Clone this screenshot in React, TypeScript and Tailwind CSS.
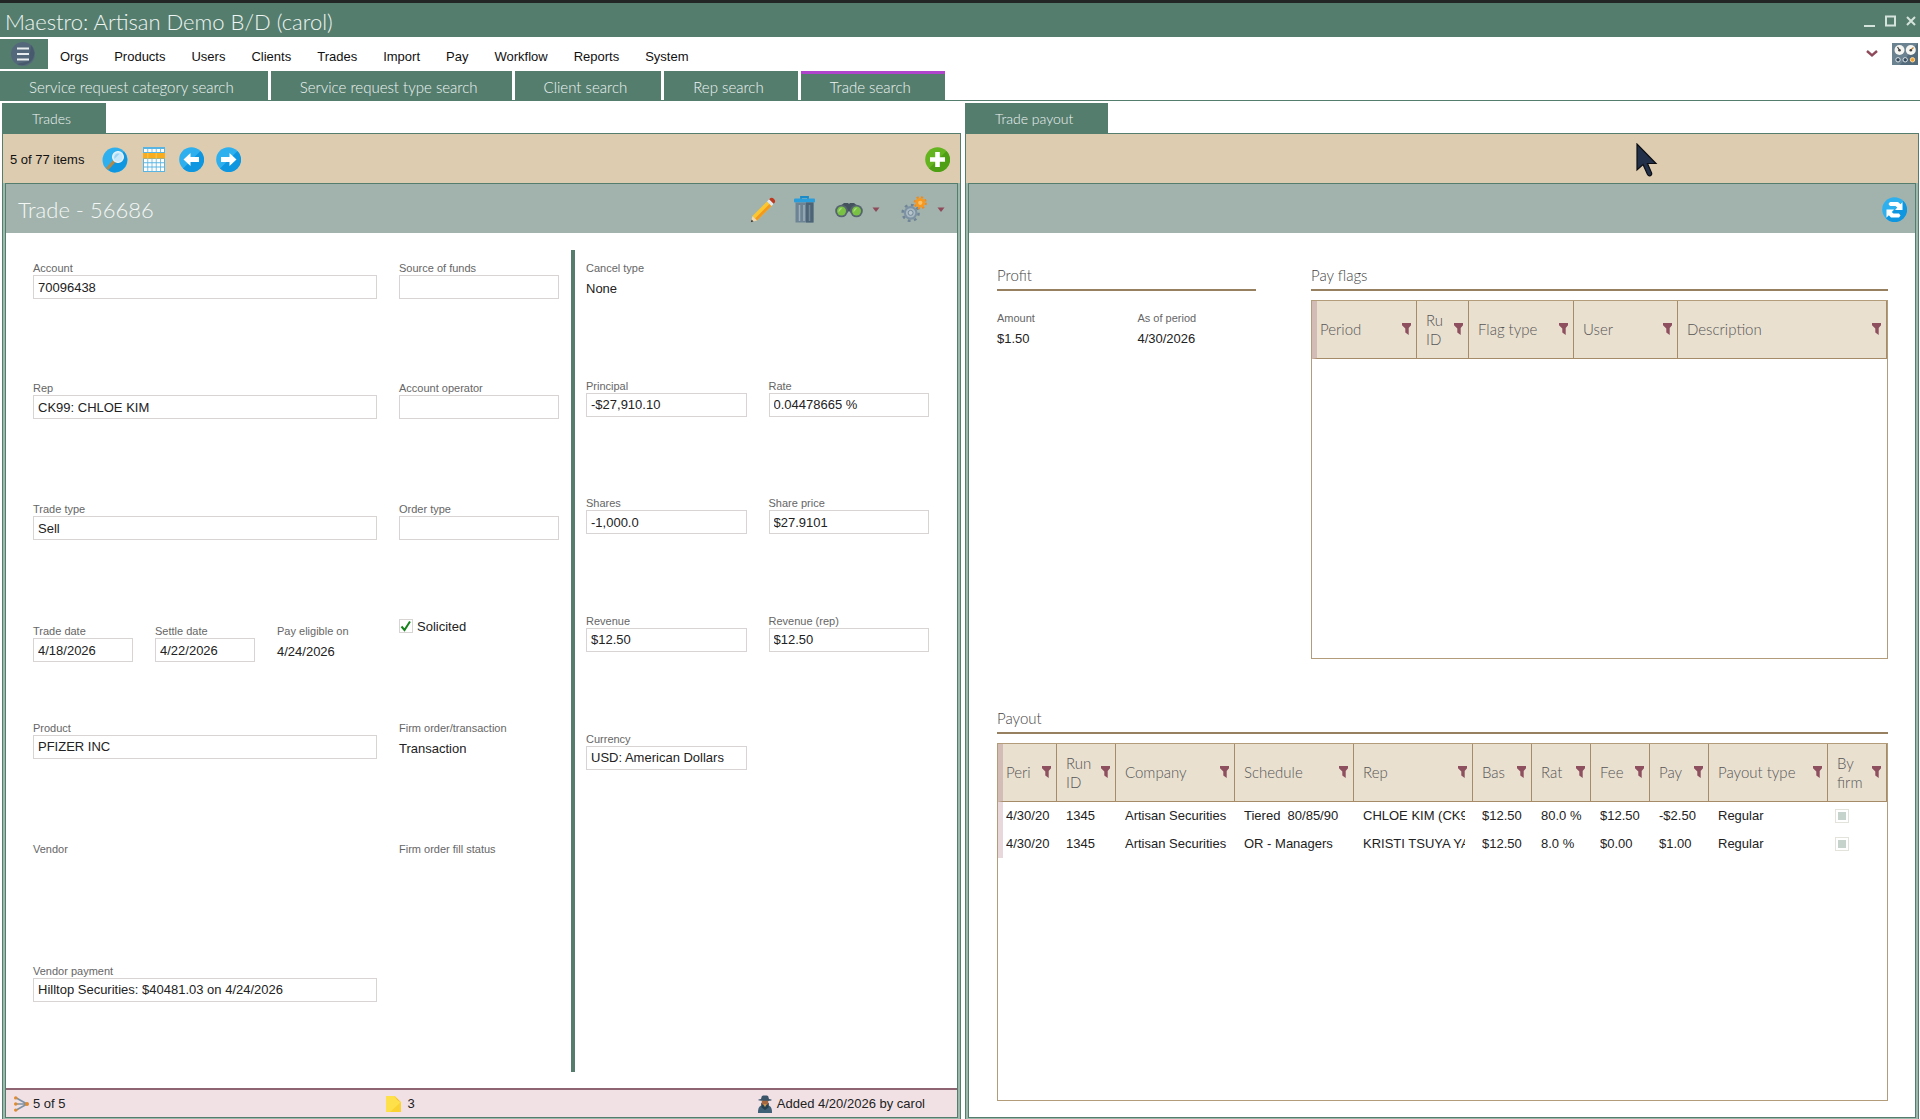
import type { ReactNode } from "react";

/* ---------- icons ---------- */

const MenuIcon = () => (
  <svg width="24" height="24" viewBox="0 0 24 24" aria-hidden="true">
    <circle cx="12" cy="12" r="12" fill="#54687b" />
    <path d="M20 3a12 12 0 0 1-14 19l12-3z" fill="#475a6d" />
    <path d="M6 6.5h12M6 12h12M6 17.5h12" stroke="#e8eef0" strokeWidth="2.2" />
  </svg>
);

const SearchIcon = () => (
  <svg width="26" height="26" viewBox="0 0 26 26" aria-hidden="true">
    <circle cx="13" cy="13" r="12.5" fill="#2fb0ee" />
    <path d="M22 4.5A12.5 12.5 0 0 1 9 24.8l-3-2z" fill="#0e96e0" />
    <path d="M6 21l6-6.5" stroke="#b08a4a" strokeWidth="3.2" strokeLinecap="round" />
    <circle cx="16" cy="10" r="5.4" fill="#c9e9fa" stroke="#eef6fa" strokeWidth="1.2" />
    <path d="M12.5 12a4 4 0 0 1 5-5.2z" fill="#9dd4f2" />
  </svg>
);

const TableIcon = () => (
  <svg width="22" height="25" viewBox="0 0 22 25" aria-hidden="true">
    <rect width="22" height="25" fill="#58b4e2" />
    <path
      d="M1 2h3.4v3H1zM5.200 2h3.400v3H5.200zM9.400 2h3.400v3H9.400zM13.600 2h3.400v3h-3.400zM17.800 2h3.200v3h-3.200zM1 12h3.400v3.300H1zM5.200 12h3.400v3.300H5.200zM9.400 12h3.400v3.300H9.400zM13.600 12h3.400v3.300h-3.400zM17.800 12h3.200v3.300h-3.200zM1 16.300h3.400v3.300H1zM5.200 16.300h3.400v3.300H5.200zM9.400 16.300h3.400v3.300H9.400zM13.600 16.300h3.400v3.300h-3.400zM17.800 16.300h3.200v3.300h-3.200zM1 20.600h3.400v3.400H1zM5.200 20.600h3.400v3.400H5.200zM9.400 20.600h3.400v3.400H9.400zM13.600 20.600h3.400v3.400h-3.400zM17.800 20.600h3.200v3.400h-3.200z"
      fill="#fff"
    />
    <rect y="6" width="22" height="5.500" fill="#f9ad1c" />
    <path d="M4.800 6v5.500M13.200 6v5.500" stroke="#fbc75c" strokeWidth="1" />
  </svg>
);

const ArrowIcon = ({ back = false }: { back?: boolean }) => (
  <svg width="25" height="25" viewBox="0 0 25 25" aria-hidden="true">
    <circle cx="12.5" cy="12.5" r="12.3" fill="#2fb0ee" />
    <path d="M21.500 4A12.3 12.3 0 0 1 4 21.500z" fill="#0e96e0" />
    {back ? (
      <path d="M4.500 12.500l7-6.500v4h8.500v5h-8.500v4z" fill="#fff" />
    ) : (
      <path d="M20.500 12.500l-7-6.500v4H5v5h8.500v4z" fill="#fff" />
    )}
  </svg>
);

const AddIcon = () => (
  <svg width="25" height="25" viewBox="0 0 25 25" aria-hidden="true">
    <circle cx="12.5" cy="12.5" r="12.3" fill="#64b420" />
    <path d="M21.500 4A12.3 12.3 0 0 1 4 21.500z" fill="#4f9f15" />
    <path d="M12.500 5v15M5 12.500h15" stroke="#fff" strokeWidth="4.600" />
  </svg>
);

const PencilIcon = () => (
  <svg width="26" height="26" viewBox="0 0 26 26" aria-hidden="true">
    <path d="M2.500 19L17 4.500l4.500 4.500L7 23.500z" fill="#fcc62f" />
    <path d="M19.500 7l2 2L7 23.500l-2-2z" fill="#f39a1e" />
    <path d="M2.500 19L7 23.500 .8 25.300z" fill="#f3d9b0" />
    <path d="M1.600 22.500L.8 25.300l2.800-.8z" fill="#3b3b3b" />
    <path d="M17 4.500l2.200-2.200 4.500 4.500L21.500 9z" fill="#e4e8ea" />
    <path d="M19.200 2.300C20.800.4 22.400.5 24 2s1.700 3-.3 4.800z" fill="#c0391f" />
  </svg>
);

const TrashIcon = () => (
  <svg width="21" height="27" viewBox="0 0 21 27" aria-hidden="true">
    <path d="M7 3V1h7v2" fill="none" stroke="#1b8ac9" strokeWidth="1.800" />
    <rect y="2.500" width="21" height="4" rx="1" fill="#2a9ddb" />
    <path d="M1.500 6.500h18V26.500h-18z" fill="#6d8494" />
    <path d="M12 6.500h7.500v20H12z" fill="#4c6475" />
    <path d="M5.500 9v16M10 9v16" stroke="#9db0bc" strokeWidth="1.500" />
    <path d="M15.500 9v16" stroke="#708898" strokeWidth="1.500" />
  </svg>
);

const BinocularsIcon = () => (
  <svg width="28" height="16" viewBox="0 0 28 16" aria-hidden="true">
    <path d="M3 6L9 1h4l1 1 1-1h4l6 5-5 5h-4l-2-2-2 2H7z" fill="#44525e" />
    <circle cx="6.500" cy="9" r="6.300" fill="#566470" />
    <circle cx="21.500" cy="9" r="6.300" fill="#566470" />
    <circle cx="6.500" cy="9" r="4.500" fill="#79c143" />
    <circle cx="21.500" cy="9" r="4.500" fill="#79c143" />
    <path d="M3.500 10.500a4 4 0 0 1 4-5zM18.500 10.500a4 4 0 0 1 4-5z" fill="#a5dc78" />
  </svg>
);

const GearsIcon = () => (
  <svg width="26" height="27" viewBox="0 0 27 28" aria-hidden="true">
    <circle cx="10" cy="17.500" r="8.300" fill="none" stroke="#6f8597" strokeWidth="2.600" strokeDasharray="2.900 3.620" />
    <circle cx="10" cy="17.500" r="6" fill="#a9b9c3" stroke="#7d92a2" strokeWidth="2.200" />
    <circle cx="10" cy="17.500" r="2.600" fill="#b9c6cc" stroke="#6f8597" />
    <circle cx="20" cy="7" r="5.900" fill="none" stroke="#f08a1c" strokeWidth="2" strokeDasharray="2.300 2.330" />
    <circle cx="20" cy="7" r="5" fill="#f7991f" />
    <circle cx="20" cy="7" r="2.200" fill="#fbc168" />
  </svg>
);

const Caret = () => (
  <svg width="8" height="5" viewBox="0 0 8 5" aria-hidden="true">
    <path d="M.5 .5h7L4 5z" fill="#8e4a58" />
  </svg>
);

const RefreshIcon = () => (
  <svg width="25" height="25" viewBox="0 0 25 25" aria-hidden="true">
    <circle cx="12.500" cy="12.500" r="12.300" fill="#2fb0ee" />
    <path d="M21.500 4A12.300 12.300 0 0 1 4 21.500z" fill="#0e96e0" />
    <path d="M8 5h8l2.500 2.200L20.500 5v8h-7.500l2.300-2.500L13.500 9H8L6.500 7z" fill="#fff" />
    <path d="M17 20.500H9L6.800 18.200 4.500 20.500v-8H12l-2.300 2.600L11.500 16.500H17l1.500 2z" fill="#fff" />
  </svg>
);

const DashboardIcon = () => (
  <svg width="26" height="22" viewBox="0 0 26 22" aria-hidden="true">
    <rect width="26" height="22" fill="#6b8291" />
    <path d="M26 0v22H8z" fill="#546b7b" />
    <circle cx="7.500" cy="7" r="5" fill="#f5f5f2" />
    <circle cx="18.800" cy="7" r="5" fill="#f5f5f2" />
    <path d="M5.500 4l2 3" stroke="#444" strokeWidth="1.200" />
    <path d="M21.500 4.500L18.800 7" stroke="#c08030" strokeWidth="1.200" />
    <circle cx="7.500" cy="7.300" r="1.300" fill="#444" />
    <circle cx="18.800" cy="7.300" r="1.300" fill="#444" />
    <circle cx="6" cy="16.800" r="2.200" fill="#34495b" stroke="#dde6ea" />
    <circle cx="13.200" cy="16.800" r="2.200" fill="#34495b" stroke="#dde6ea" />
    <circle cx="20.500" cy="16.800" r="2.200" fill="#f0a030" stroke="#f5d9a8" />
  </svg>
);

const FunnelIcon = () => (
  <svg width="9" height="12" viewBox="0 0 9 12" aria-hidden="true">
    <path d="M0 0h9v2.200L6.700 5v7L3.300 9.500V5.500L0 2.200z" fill="#8e4f5f" />
  </svg>
);

const BranchIcon = () => (
  <svg width="15" height="16" viewBox="0 0 15 16" aria-hidden="true">
    <path d="M1.500 1.500L13 8 1.500 14.500M1.500 8H13" fill="none" stroke="#7d93a5" strokeWidth="1.700" />
    <circle cx="1.700" cy="1.900" r="1.700" fill="#e08a2e" />
    <circle cx="1.700" cy="8" r="1.700" fill="#e08a2e" />
    <circle cx="1.700" cy="14.100" r="1.700" fill="#e08a2e" />
    <circle cx="13" cy="8" r="2" fill="#e08a2e" />
  </svg>
);

const NoteIcon = () => (
  <svg width="15" height="16" viewBox="0 0 15 16" aria-hidden="true">
    <path d="M0 0h9l6 6v10H0z" fill="#fde04a" />
    <path d="M8 0l7 6.500L11.500 4z" fill="#f0a52a" />
    <path d="M15 6v10H4z" fill="#fad232" />
  </svg>
);

const AgentIcon = () => (
  <svg width="16" height="18" viewBox="0 0 16 18" aria-hidden="true">
    <path d="M4.800 1.200C5.500.1 7 .5 8 .5s2.500-.4 3.200.7L12 4c2 .3 2.800.6 2.800 1S13 6 8 6 1.200 5.400 1.200 5 2 4.300 4 4z" fill="#3b5568" />
    <path d="M4.800 5.800h6.400v2a3.200 3.200 0 0 1-6.400 0z" fill="#a5683f" />
    <path d="M1 18C.8 12 3 10 8 10s7.200 2 7 8z" fill="#3f6076" />
    <path d="M4 7.500L8 12l4-4.500-.5 5L8 15l-3.500-2.500z" fill="#26404f" />
    <path d="M6.500 9.300h3L8 12z" fill="#d8a24c" />
  </svg>
);

/* ---------- form parts ---------- */

const slug = (s: string) => s.toLowerCase().replace(/[^a-z]+/g, "-");

function Field({ label, value = "" }: { label: string; value?: string }) {
  const id = slug(label);
  return (
    <div className="min-w-0">
      <label htmlFor={id} className="block h-3.5 whitespace-nowrap text-[11px] leading-[14px] text-[#666]">
        {label}
      </label>
      <input
        id={id}
        defaultValue={value}
        className="block h-6 w-full min-w-0 rounded-none border border-[#d8d4d4] bg-white px-1 text-[13px] text-[#222] outline-none"
      />
    </div>
  );
}

function Fact({ label, value = "" }: { label: string; value?: string }) {
  return (
    <dl className="min-w-0">
      <dt className="h-3.5 whitespace-nowrap text-[11px] leading-[14px] text-[#666]">{label}</dt>
      <dd className="pt-1 text-[13px] leading-5 text-[#222]">{value}</dd>
    </dl>
  );
}

/* ---------- grids ---------- */

type Column = { name: string; width: string };

const flagColumns: Column[] = [
  { name: "Period", width: "w-[105px]" },
  { name: "Ru ID", width: "w-[52px]" },
  { name: "Flag type", width: "w-[105px]" },
  { name: "User", width: "w-[104px]" },
  { name: "Description", width: "w-[209px]" },
];

const payoutColumns: Column[] = [
  { name: "Peri", width: "w-[59px]" },
  { name: "Run ID", width: "w-[59px]" },
  { name: "Company", width: "w-[119px]" },
  { name: "Schedule", width: "w-[119px]" },
  { name: "Rep", width: "w-[119px]" },
  { name: "Bas", width: "w-[59px]" },
  { name: "Rat", width: "w-[59px]" },
  { name: "Fee", width: "w-[59px]" },
  { name: "Pay", width: "w-[59px]" },
  { name: "Payout type", width: "w-[119px]" },
  { name: "By firm", width: "w-[59px]" },
];

const payoutRows = [
  ["4/30/20", "1345", "Artisan Securities", "Tiered  80/85/90", "CHLOE KIM (CK9", "$12.50", "80.0 %", "$12.50", "-$2.50", "Regular"],
  ["4/30/20", "1345", "Artisan Securities", "OR - Managers", "KRISTI TSUYA YA", "$12.50", "8.0 %", "$0.00", "$1.00", "Regular"],
];

function HeaderRow({ columns }: { columns: Column[] }) {
  return (
    <thead>
      <tr className="h-[58px] bg-[#e9e0d0]">
        {columns.map((c, i) => (
          <th
            key={c.name}
            scope="col"
            className={`${c.width} border-r border-b border-[#a58b68] p-0 text-left font-light ${i === 0 ? "border-l-[5px] border-l-[#d3bcb5]" : ""}`}
          >
            <div className={`flex items-center pr-[5px] ${i === 0 ? "pl-[3px]" : "pl-[9px]"}`}>
              <span
                className={`min-w-0 flex-1 overflow-hidden font-[Lato] text-[15px] leading-[19px] text-[#555] ${c.name.endsWith("ID") || c.name === "By firm" ? "" : "whitespace-nowrap"}`}
              >
                {c.name}
              </span>
              <button aria-label={`Filter ${c.name}`} className="shrink-0 pb-0.5">
                <FunnelIcon />
              </button>
            </div>
          </th>
        ))}
      </tr>
    </thead>
  );
}

function SectionTitle({ children }: { children: ReactNode }) {
  return (
    <h3 className="h-7 border-b-2 border-[#97805f] font-[Lato] text-[15px] leading-6 font-light text-[#444]">{children}</h3>
  );
}

/* ---------- page ---------- */

const menus = ["Orgs", "Products", "Users", "Clients", "Trades", "Import", "Pay", "Workflow", "Reports", "System"];
const searches = ["Service request category search", "Service request type search", "Client search", "Rep search", "Trade search"];

function PanelTab({ children }: { children: ReactNode }) {
  return (
    <div role="tablist" className="flex h-[30px]">
      <button role="tab" aria-selected="true" className="bg-[#557d6e] pr-[35px] pl-[30px] font-[Lato] text-[14px] font-light text-[#eef5f2]">
        {children}
      </button>
    </div>
  );
}

export default function App() {
  return (
    <div className="flex min-h-screen flex-col bg-white font-['Liberation_Sans',Arial,sans-serif] text-[13px] text-[#222]">
      <header>
        <div className="flex h-[37px] items-center justify-between border-t-[3px] border-[#222625] bg-[#557d6e] pt-0.5 pr-1 pl-[5px]">
          <h1 className="font-[Lato] text-[22px] font-light text-[#eef5f2]">Maestro: Artisan Demo B/D (carol)</h1>
          <div className="flex items-center gap-2.5 text-[#d5e3dd]">
            <button aria-label="Minimize">
              <svg width="11" height="12" viewBox="0 0 11 12"><path d="M0 11h11" stroke="currentColor" strokeWidth="2" /></svg>
            </button>
            <button aria-label="Maximize">
              <svg width="11" height="12" viewBox="0 0 11 12"><rect x="1" y="1.500" width="9" height="9" fill="none" stroke="currentColor" strokeWidth="2" /></svg>
            </button>
            <button aria-label="Close">
              <svg width="10" height="12" viewBox="0 0 10 12"><path d="M1 2l8 8M9 2l-8 8" stroke="currentColor" strokeWidth="2" /></svg>
            </button>
          </div>
        </div>
        <nav className="flex h-[34px] items-start justify-between pt-0.5">
          <div className="flex h-[30px] items-stretch">
            <button aria-label="Main menu" className="flex w-12 items-start justify-center bg-[#557d6e] pt-[3px] pr-0.5">
              <MenuIcon />
            </button>
            <div className="flex gap-[26px] pt-1.5 pl-3">
              {menus.map((m) => (
                <button key={m} className="text-[13px] leading-6 text-[#111]">{m}</button>
              ))}
            </div>
          </div>
          <div className="flex items-center gap-3.5 pt-1 pr-0.5">
            <button aria-label="Expand">
              <svg width="12" height="8" viewBox="0 0 12 8"><path d="M1 1l5 4.500L11 1" fill="none" stroke="#8e4a5a" strokeWidth="2.400" /></svg>
            </button>
            <button aria-label="Dashboard"><DashboardIcon /></button>
          </div>
        </nav>
        <div role="tablist" className="flex h-[30px] items-stretch gap-[3px] border-b border-[#557d6e]">
          {searches.map((s, i) => (
            <button
              key={s}
              role="tab"
              aria-selected={i === 4}
              className={`border-t-[3px] bg-[#557d6e] pr-[34px] pl-[29px] font-[Lato] text-[15px] leading-5 font-light text-[#eef5f2] ${i === 4 ? "border-[#b044cc]" : "border-[#557d6e]"}`}
            >
              {s}
            </button>
          ))}
        </div>
      </header>

      <main className="grid flex-1 grid-cols-[959fr_954fr] gap-x-1 pt-0.5 pr-px pl-0.5">
        <section className="flex min-w-0 flex-col">
          <PanelTab>Trades</PanelTab>
          <div className="flex flex-1 flex-col border border-b-0 border-[#557d6e]">
            <div className="flex h-[49px] items-center justify-between bg-[#ddccb0] pt-0.5 pr-2.5 pl-[7px]">
              <div className="flex items-center">
                <span className="mr-[18px] text-[#111]">5 of 77 items</span>
                <button aria-label="Search" className="mr-[15px]"><SearchIcon /></button>
                <button aria-label="Table view" className="mr-3.5"><TableIcon /></button>
                <button aria-label="Previous" className="mr-3"><ArrowIcon back /></button>
                <button aria-label="Next"><ArrowIcon /></button>
              </div>
              <button aria-label="Add"><AddIcon /></button>
            </div>
            <div className="flex flex-1 flex-col bg-[#9db8ad] px-0.5 pb-px">
              <div className="flex flex-1 flex-col border border-[#557d6e] bg-white">
                <div className="flex h-[49px] items-center justify-between bg-[#a2b3ad] pt-0.5 pr-3 pl-3">
                  <h2 className="font-[Lato] text-[22px] font-light text-[#f3f7f5]">Trade - 56686</h2>
                  <div className="flex items-center">
                    <button aria-label="Edit" className="mr-[18px]"><PencilIcon /></button>
                    <button aria-label="Delete" className="mr-5"><TrashIcon /></button>
                    <button aria-label="Find" className="mr-[21px] flex items-center gap-[9px]"><BinocularsIcon /><Caret /></button>
                    <button aria-label="Settings" className="flex items-center gap-2.5"><GearsIcon /><Caret /></button>
                  </div>
                </div>

                <form className="grid flex-1 grid-cols-[538fr_4px_354fr] pt-[17px] pr-7 pb-4 pl-[27px]">
                  <div className="grid grid-cols-[344fr_160fr] grid-rows-[120fr_121fr_122fr_96fr_121fr_122fr_108fr] gap-x-[22px] pt-[11px] pr-3">
                    <Field label="Account" value="70096438" />
                    <Field label="Source of funds" />
                    <Field label="Rep" value="CK99: CHLOE KIM" />
                    <Field label="Account operator" />
                    <Field label="Trade type" value="Sell" />
                    <Field label="Order type" />
                    <div className="grid grid-cols-3 gap-x-[22px]">
                      <Field label="Trade date" value="4/18/2026" />
                      <Field label="Settle date" value="4/22/2026" />
                      <Fact label="Pay eligible on" value="4/24/2026" />
                    </div>
                    <label className="-mt-2 flex h-5 items-center gap-1">
                      <span className="grid">
                        <input type="checkbox" defaultChecked className="peer col-start-1 row-start-1 size-3.5 appearance-none border border-[#d8d4d4] bg-white" />
                        <svg width="14" height="14" viewBox="0 0 14 14" className="pointer-events-none invisible col-start-1 row-start-1 peer-checked:visible">
                          <path d="M2.500 7.500L5.500 11l5.500-8.500" fill="none" stroke="#15831c" strokeWidth="2" />
                        </svg>
                      </span>
                      Solicited
                    </label>
                    <Field label="Product" value="PFIZER INC" />
                    <Fact label="Firm order/transaction" value="Transaction" />
                    <Fact label="Vendor" />
                    <Fact label="Firm order fill status" />
                    <Field label="Vendor payment" value="Hilltop Securities: $40481.03 on 4/24/2026" />
                  </div>
                  <div className="bg-[#557d6e]" />
                  <div className="grid grid-cols-2 grid-rows-[235fr_235fr_235fr_235fr_680fr] gap-x-[22px] pt-[11px] pl-[11px]">
                    <div className="col-span-2"><Fact label="Cancel type" value="None" /></div>
                    <Field label="Principal" value="-$27,910.10" />
                    <Field label="Rate" value="0.04478665 %" />
                    <Field label="Shares" value="-1,000.0" />
                    <Field label="Share price" value="$27.9101" />
                    <Field label="Revenue" value="$12.50" />
                    <Field label="Revenue (rep)" value="$12.50" />
                    <Field label="Currency" value="USD: American Dollars" />
                  </div>
                </form>

                <footer className="grid h-[29px] grid-cols-[40%_1fr_auto] items-center border-t-2 border-[#8e6473] bg-[#f1e1e5]">
                  <span className="flex items-center gap-1 pl-2"><BranchIcon />5 of 5</span>
                  <span className="flex items-center gap-1.5"><NoteIcon />3</span>
                  <span className="flex items-center gap-1 pr-8"><AgentIcon />Added 4/20/2026 by carol</span>
                </footer>
              </div>
            </div>
          </div>
        </section>

        <section className="flex min-w-0 flex-col">
          <PanelTab>Trade payout</PanelTab>
          <div className="flex flex-1 flex-col border border-b-0 border-[#557d6e]">
            <div className="relative h-[49px] bg-[#ddccb0]">
              <svg width="22" height="36" viewBox="0 0 22 36" className="absolute top-[9px] left-[670px]" aria-hidden="true">
                <path d="M1 1v26l6-5.500 4.500 10c1.500 2.500 5 1 4-1.700L11.500 20.500H20z" fill="#22304a" stroke="#0d0f14" strokeWidth="1.200" />
              </svg>
            </div>
            <div className="flex flex-1 flex-col bg-[#9db8ad] px-0.5 pb-px">
              <div className="flex flex-1 flex-col border border-[#557d6e] bg-white">
                <div className="flex h-[49px] items-center justify-end bg-[#a2b3ad] pt-0.5 pr-2">
                  <button aria-label="Refresh"><RefreshIcon /></button>
                </div>
                <div className="flex flex-1 flex-col pt-[30px] pr-[27px] pb-4 pl-7">
                  <div className="grid grid-cols-[260fr_576fr] gap-x-[55px]">
                    <div>
                      <SectionTitle>Profit</SectionTitle>
                      <div className="grid grid-cols-[141fr_119fr] pt-5">
                        <Fact label="Amount" value="$1.50" />
                        <Fact label="As of period" value="4/30/2026" />
                      </div>
                    </div>
                    <div>
                      <SectionTitle>Pay flags</SectionTitle>
                      <div className="mt-[9px] h-[359px] border border-[#b39c79]">
                        <table className="w-full table-fixed border-separate border-spacing-0">
                          <HeaderRow columns={flagColumns} />
                        </table>
                      </div>
                    </div>
                  </div>
                  <div className="flex flex-1 flex-col pt-[47px]">
                    <SectionTitle>Payout</SectionTitle>
                    <div className="mt-[9px] flex-1 border border-[#b39c79]">
                      <table className="w-full table-fixed border-separate border-spacing-0">
                        <HeaderRow columns={payoutColumns} />
                        <tbody>
                          {payoutRows.map((row, r) => (
                            <tr key={r} className="h-[28px]">
                              {row.map((cell, i) => (
                                <td key={i} className={`p-0 ${i === 0 ? "border-l-[5px] border-[#e8d8dc]" : ""}`}>
                                  <div className={`overflow-hidden whitespace-pre ${i === 0 ? "mr-1 ml-[3px]" : "mr-2 ml-[9px]"}`}>{cell}</div>
                                </td>
                              ))}
                              <td className="p-0 pl-[7px]">
                                <span className="grid size-3.5 place-items-center">
                                  <input type="checkbox" disabled aria-label="By firm" className="col-start-1 row-start-1 size-3.5 appearance-none border border-[#e3e3dc] bg-white" />
                                  <span className="col-start-1 row-start-1 size-2 bg-[#c6d2cc]" />
                                </span>
                              </td>
                            </tr>
                          ))}
                        </tbody>
                      </table>
                    </div>
                  </div>
                </div>
              </div>
            </div>
          </div>
        </section>
      </main>
    </div>
  );
}
